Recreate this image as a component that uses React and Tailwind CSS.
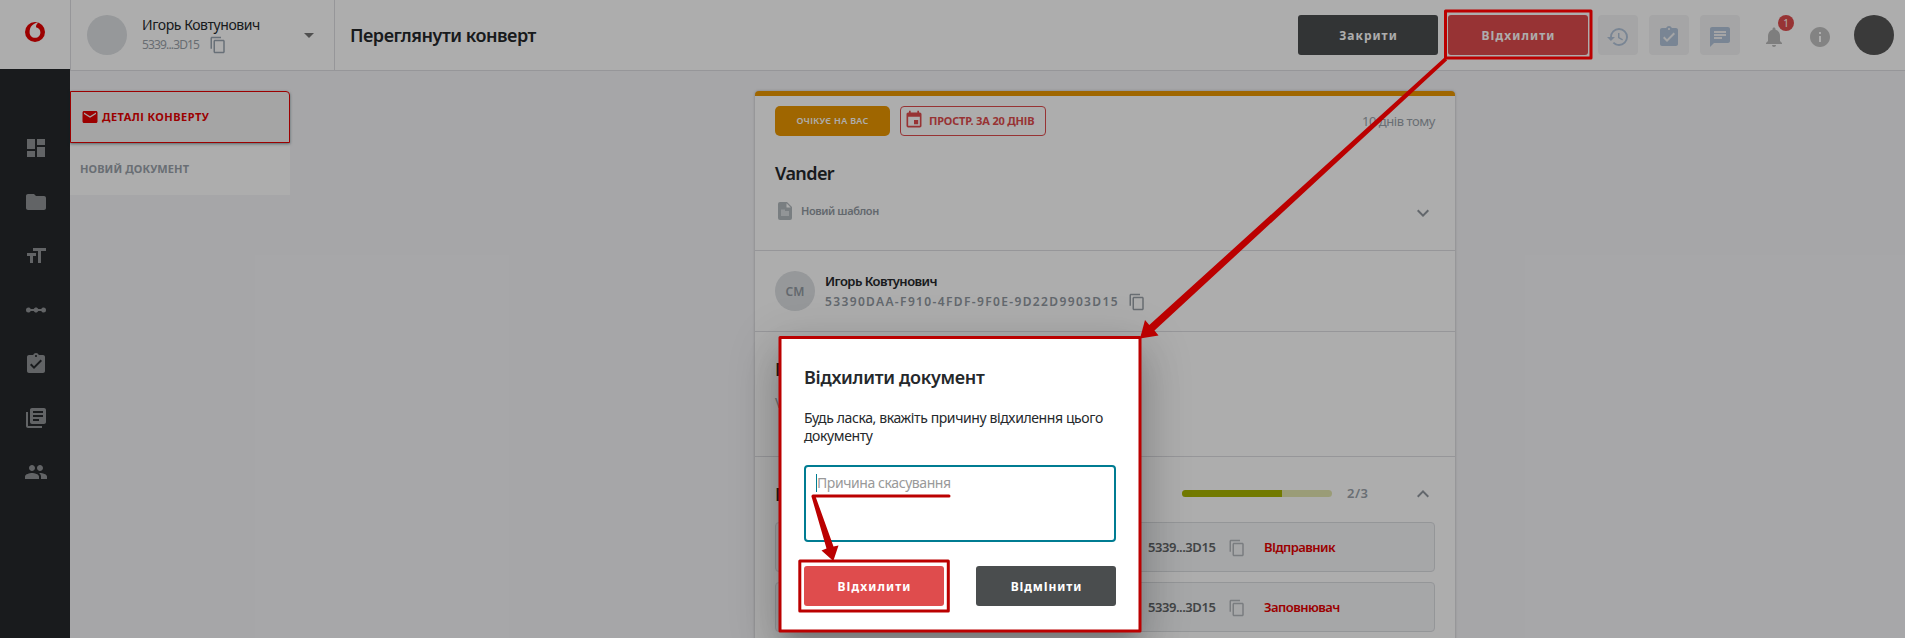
import React from "react";
import {
  MdDashboard, MdFolder, MdFormatSize, MdLinearScale, MdAssignmentTurnedIn, MdLibraryBooks, MdPeople,
  MdContentCopy, MdArrowDropDown, MdHistory, MdChat, MdNotifications, MdInfo, MdEmail, MdEvent,
  MdExpandMore, MdExpandLess,
} from "react-icons/md";

const navIcons = [MdDashboard, MdFolder, MdFormatSize, MdLinearScale, MdAssignmentTurnedIn, MdLibraryBooks, MdPeople];

function Logo() {
  return (
    <svg viewBox="0 0 20 20" className="size-5">
      <circle cx="10" cy="10" r="10" fill="#e60000" />
      <path d="M13.400 0.500C11 0.800 8.300 1.800 7 3.600 5.300 5.200 4.600 7.700 4.600 10.200 4.600 13.400 7 15.800 10.100 15.800 13.200 15.800 15.400 13.400 15.400 10.400 15.400 7.600 13.600 5.700 11 5.200 10.900 3.400 11.900 1.500 13.400 0.500Z" fill="#fff" />
    </svg>
  );
}

function TemplateIcon() {
  return (
    <svg viewBox="0 0 14 18" className="h-[18px] w-3.5">
      <path d="M2 0h7l5 5v11a2 2 0 0 1-2 2H2a2 2 0 0 1-2-2V2a2 2 0 0 1 2-2Z" fill="#b3babf" />
      <path d="M8.500 1.300v4.200h4.200Z" fill="#fff" />
      <path d="M3 7.500h4v1.500h4V14H3Z" fill="#d8dcdf" />
    </svg>
  );
}

function Sidebar() {
  return (
    <aside className="flex w-[70px] shrink-0 flex-col bg-[#25282b]">
      <div className="flex h-[69px] items-center justify-center bg-white pb-[5px]"><Logo /></div>
      <nav className="flex flex-col items-center gap-[30px] pt-[67px] pl-0.5 text-[#919497]">
        {navIcons.map((Icon, i) => <Icon key={i} size={24} />)}
      </nav>
    </aside>
  );
}

function Header() {
  return (
    <header className="flex h-[71px] shrink-0 border-b border-l border-[#dddee2] bg-white">
      <div className="flex w-[264px] items-center border-r border-[#dddee2] pl-4">
        <div className="size-10 rounded-full bg-[#dde0e3]" />
        <div className="ml-[15px] flex flex-col">
          <span className="text-sm leading-5 tracking-[-0.42px] text-[#25282b]">Игорь Ковтунович</span>
          <span className="flex h-5 items-center text-xs tracking-[-0.85px] text-[#9aa1a8]">
            5339...3D15
            <MdContentCopy size={18} className="ml-2.5 text-[#9aa5b1]" />
          </span>
        </div>
        <MdArrowDropDown size={24} className="mr-[13px] ml-auto text-[#767676]" />
      </div>
      <h1 className="self-center pl-[15px] text-lg font-semibold tracking-[-0.47px] text-[#25282b]">Переглянути конверт</h1>
      <div className="ml-auto flex items-center pr-[11px]">
        <button className="h-10 w-[140px] rounded-[3px] bg-[#4a4d4e] pt-0.5 pl-px text-xs font-bold tracking-[1px] text-white">Закрити</button>
        <button className="ml-2.5 h-10 w-[140px] rounded-[3px] bg-[#df4c4d] pt-0.5 pl-px text-xs font-bold tracking-[1.1px] text-white">ВІдхилити</button>
        <div className="ml-2.5 flex gap-[11px] text-[#b3c5da]">
          {[MdHistory, MdAssignmentTurnedIn, MdChat].map((Icon, i) => (
            <div key={i} className="flex size-10 items-center justify-center rounded bg-[#f4f4f5] pt-1"><Icon size={24} /></div>
          ))}
        </div>
        <div className="relative mt-1 ml-[22px] text-[#bababa]">
          <MdNotifications size={24} />
          <span className="absolute -top-2.5 left-4 flex size-4 items-center justify-center rounded-full bg-[#df4c4d] text-[10px] text-white">1</span>
        </div>
        <MdInfo size={24} className="mt-1 ml-[22px] text-[#c2c2c2]" />
        <div className="ml-[22px] size-10 rounded-full bg-[#565656]" />
      </div>
    </header>
  );
}

function Tabs() {
  return (
    <div className="flex h-[104px] w-[220px] flex-col bg-white">
      <div className="flex h-[52px] items-center rounded-tr border border-[#e60000] bg-[#f3f3f3] pl-2.5 text-[11px] font-bold tracking-[0.45px] text-[#e60000] shadow-[0_1px_3px_rgba(0,60,70,0.5)]">
        <MdEmail size={18} className="mr-[3px]" />
        ДЕТАЛІ КОНВЕРТУ
      </div>
      <div className="flex h-[52px] items-center pl-2.5 text-[11px] font-bold tracking-[0.1px] text-[#9ba3ab]">НОВИЙ ДОКУМЕНТ</div>
    </div>
  );
}

function Participant({ role }) {
  return (
    <div className="flex h-[50px] items-center rounded border border-[#dadde1] bg-[#f5f6f8] pl-[372px] text-[13px] font-semibold">
      <span className="w-20 pt-0.5 tracking-[-0.45px] text-[#636668]">5339...3D15</span>
      <MdContentCopy size={18} className="mt-px text-[#b4b8bd]" />
      <span className="ml-[18px] pt-0.5 tracking-[-0.55px] text-[#e60000]">{role}</span>
    </div>
  );
}

function EnvelopeCard() {
  return (
    <section className="w-[700px] shrink-0 rounded-t border-t-[5px] border-[#eb9700] bg-white pb-10 shadow-[0_0_3px_rgba(0,0,0,0.25)]">
      <div className="flex h-[155px] flex-col border-b border-[#dddee2] px-5 pt-2.5">
        <div className="flex items-center">
          <span className="flex h-[30px] w-[115px] items-center justify-center rounded-[5px] bg-[#eb9700] text-[9px] font-semibold tracking-[0.3px] text-white">ОЧІКУЄ НА ВАС</span>
          <span className="ml-2.5 flex h-[30px] w-[146px] items-center rounded border border-[#df4c4d] pl-[3px] text-[11px] font-bold tracking-[-0.2px] text-[#df4c4d]">
            <MdEvent size={20} className="mr-[5px] mb-0.5" />
            <span className="pt-px">ПРОСТР. ЗА 20 ДНІВ</span>
          </span>
          <span className="ml-auto pt-0.5 text-[13px] tracking-[-0.45px] text-[#9ba3ab]">10 днів тому</span>
        </div>
        <h2 className="mt-6 text-lg leading-[26px] font-semibold tracking-[-0.6px] text-[#25282b]">Vander</h2>
        <div className="mt-[13px] flex h-6 items-center pl-[3px]">
          <TemplateIcon />
          <span className="ml-[9px] text-[11px] font-semibold tracking-[-0.4px] text-[#929aa2]">Новий шаблон</span>
          <MdExpandMore size={24} className="mt-1 ml-auto text-[#9299a0]" />
        </div>
      </div>
      <div className="flex h-[81px] items-center border-b border-[#dddee2] px-5">
        <span className="flex size-10 items-center justify-center rounded-full bg-[#dde0e3] pt-0.5 text-xs font-semibold text-[#929aa2]">CM</span>
        <div className="ml-2.5 flex flex-col">
          <span className="text-[13px] leading-5 font-semibold tracking-[-0.53px] text-[#25282b]">Игорь Ковтунович</span>
          <span className="flex h-5 items-center text-xs font-semibold tracking-[1.36px] text-[#929aa2]">
            <span className="pt-0.5">53390DAA-F910-4FDF-9F0E-9D22D9903D15</span>
            <MdContentCopy size={18} className="ml-[9px] mt-px text-[#9aa1a8]" />
          </span>
        </div>
      </div>
      <div className="h-[125px] border-b border-[#dddee2] px-5 pt-6">
        <p className="text-lg leading-[26px] font-semibold text-[#25282b]">П</p>
        <p className="mt-[11px] text-sm leading-5 text-[#9ba3ab]">V</p>
      </div>
      <div className="flex flex-col gap-2.5 px-5 pt-6">
        <div className="flex h-[26px] items-center">
          <span className="w-[407px] text-lg font-semibold text-[#25282b]">П</span>
          <div className="mb-0.5 h-[7px] w-[150px] overflow-hidden rounded-sm bg-[#e4e6b0]"><div className="h-full w-2/3 bg-[#a8b400]" /></div>
          <span className="ml-[15px] text-[13px] font-semibold tracking-[0.5px] text-[#9ba3ab]">2/3</span>
          <MdExpandLess size={24} className="ml-auto text-[#9299a0]" />
        </div>
        <div className="mt-[5px] flex flex-col gap-2.5">
          <Participant role="ВІдправник" />
          <Participant role="Заповнювач" />
        </div>
      </div>
    </section>
  );
}

function RejectDialog() {
  return (
    <div className="absolute top-[338px] left-[780px] flex h-[292px] w-[360px] flex-col bg-white px-6 shadow-[0_11px_15px_-7px_rgba(0,0,0,0.2),0_24px_38px_3px_rgba(0,0,0,0.14),0_9px_46px_8px_rgba(0,0,0,0.12)]">
      <h3 className="mt-[26px] text-lg leading-[26px] font-semibold tracking-[-0.3px] text-[#25282b]">Відхилити документ</h3>
      <p className="mt-[19px] text-sm leading-[18px] tracking-[-0.39px] text-[#25282b]">Будь ласка, вкажіть причину відхилення цього документу</p>
      <div className="mt-5 h-[77px] rounded border-2 border-[#007c92] px-2.5 pt-[7px]">
        <span className="block h-[18px] border-l border-[#007c92] text-sm leading-[18px] tracking-[-0.42px] text-[#999]">Причина скасування</span>
      </div>
      <div className="mt-6 flex justify-between">
        <button className="h-10 w-[140px] rounded-[3px] bg-[#df4c4d] pt-0.5 pl-px text-xs font-bold tracking-[1.1px] text-white">ВІдхилити</button>
        <button className="h-10 w-[140px] rounded-[3px] bg-[#4a4d4e] pt-0.5 pl-px text-xs font-bold tracking-[0.9px] text-white">ВІдмІнити</button>
      </div>
    </div>
  );
}

function Annotations() {
  return (
    <svg viewBox="0 0 1905 638" className="absolute inset-0 h-[638px] w-[1905px]">
      <g fill="none" stroke="#bb0000" strokeWidth="3" strokeLinejoin="round" strokeLinecap="round">
        <rect x="1445.500" y="11" width="145.500" height="47" />
        <rect x="780" y="337.500" width="360" height="293.500" />
        <rect x="799.800" y="561" width="148.500" height="50" />
        <path d="M813 496H949" />
      </g>
      <g fill="#bb0000">
        <path d="M1444.500 57.500 1447.200 60.300 1154.500 330.500 1158.500 335.500 1140 338.500 1145 320 1149.300 325Z" />
        <path d="M811.500 496.500 815 495 833.500 546.500 838.500 545.500 833.300 561 821.500 550.500 826.500 548.500Z" />
      </g>
    </svg>
  );
}

export default function App() {
  return (
    <div className="relative flex h-[638px] w-[1905px] overflow-hidden bg-[#f5f5f8] font-['Noto_Sans',sans-serif]">
      <Sidebar />
      <div className="flex min-w-0 flex-1 flex-col">
        <Header />
        <main className="flex min-h-0 flex-1 items-start pt-5">
          <Tabs />
          <div className="ml-[465px]"><EnvelopeCard /></div>
        </main>
      </div>
      <div className="absolute inset-0 bg-black/32" />
      <RejectDialog />
      <Annotations />
    </div>
  );
}
